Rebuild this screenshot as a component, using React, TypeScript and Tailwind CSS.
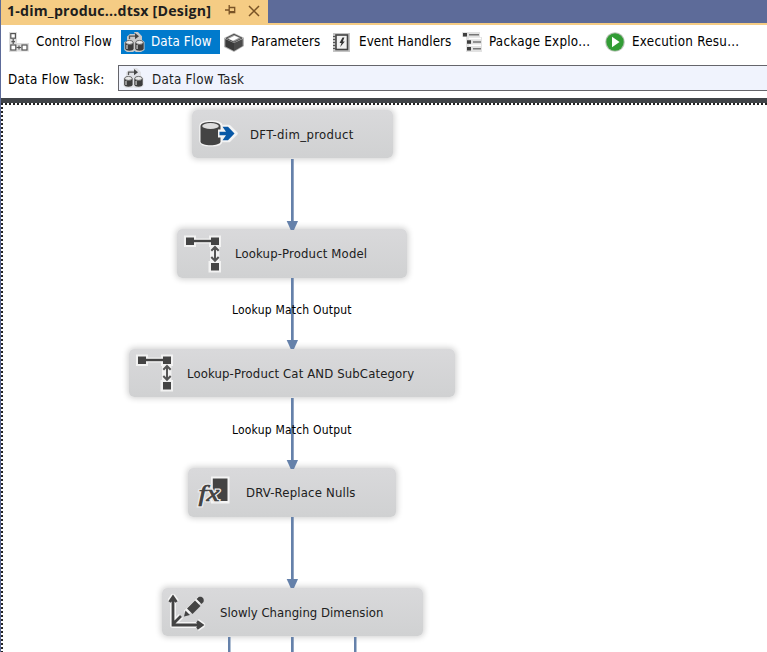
import type { ReactNode } from "react";

const UI = "font-['DejaVu_Sans_Condensed','DejaVu_Sans','Noto_Sans',sans-serif] [font-stretch:condensed]";

function ControlFlowIcon() {
  return (
    <svg width="20" height="20" viewBox="0 0 20 20" fill="#fff" stroke="#555" strokeWidth="1.2">
      <rect x="0" y="0" width="8" height="20" fill="#ddd" stroke="none" />
      <rect x="0" y="11" width="20" height="8.5" fill="#ddd" stroke="none" />
      <rect x="1.8" y="1.6" width="4.6" height="4.6" />
      <rect x="1.8" y="13" width="5" height="5" />
      <rect x="13" y="13" width="5" height="5" />
      <path d="M4.2 7v5M2.4 9.7h3.6M7.5 15.5H12M10 13.5v4" fill="none" />
    </svg>
  );
}

function DataFlowIcon({ halo }: { halo: string }) {
  return (
    <svg width="21" height="20" viewBox="0 0 21 20">
      <path d="M3 9V4.5L6 2h5L10 0h4l4 4.2V8l2.5 2v8L17 20h-5l-1.5-1L9 20H3L.3 18v-8Z" fill={halo} />
      <path d="M5.5 7V4.2H12" fill="none" stroke="#555" strokeWidth="1.3" />
      <path d="M11 1 15 4.2 11 7.300Z" fill="#444" />
      {[1.2, 11.3].map((x) => (
        <g key={x}>
          <path d={`M${x} 10.5v6c0 3 8.4 3 8.4 0v-6Z`} fill="#3d3d3d" />
          <ellipse cx={x + 4.2} cy="10.4" rx="3.7" ry="2" fill="#e8e8e8" stroke="#555" strokeWidth="0.8" />
          <path d={`M${x + 1.8} 13v4`} stroke="#bbb" strokeWidth="1.4" />
        </g>
      ))}
    </svg>
  );
}

function CubeIcon() {
  return (
    <svg width="20" height="19" viewBox="0 0 20 19">
      <path d="M10 0 20 4.8V13L10 19 0 14V5Z" fill="#b5b5b5" />
      <path d="M1.3 6 10 10v8L1.3 13.4Z" fill="#3b3b3b" />
      <path d="M18.7 6 10 10v8l8.7-5Z" fill="#4b4b4b" />
      <path d="m2 5.3 8-4 8 3.8-8 4Z" fill="#999" stroke="#555" />
      <path d="m4.500 5.8 6-3 4.500 2-6 3Z" fill="#fff" />
    </svg>
  );
}

function EventIcon() {
  return (
    <svg width="19" height="19" viewBox="0 0 19 19">
      <path d="M1 0h17v19H1Z" fill="#c4c4c4" />
      <rect x="4" y="2" width="11.5" height="14.5" fill="#f2f2f2" stroke="#444" strokeWidth="1.6" />
      <path d="M1 3.5h3M1 6.5h3M1 9.5h3M1 12.5h3M1 15.5h3" stroke="#555" />
      <path d="m10.5 4.5-3 5.5h2L8.2 14l4.6-5.5h-2l1.6-4Z" fill="#333" />
    </svg>
  );
}

function ExplorerIcon() {
  return (
    <svg width="20" height="20" viewBox="0 0 20 20">
      <path d="M0 0h18v5H20v15H4V5H0Z" fill="#e2e2e2" />
      <path d="M1 1h4v3.5H1ZM5 8.2h4v3.6H5ZM5 15h4v3.6H5Z" fill="#3f3f3f" />
      <path d="M7 2.7h10M11 10h8M11 16.8h8" stroke="#777" strokeWidth="1.5" />
      <path d="M7 6.5h12M7 13.3h12" stroke="#fff" strokeWidth="1.5" />
    </svg>
  );
}

function RunIcon() {
  return (
    <svg width="20" height="20" viewBox="0 0 20 20">
      <circle cx="10" cy="10" r="9.8" fill="#b9c3b7" />
      <circle cx="10" cy="10" r="8.7" fill="#329c35" />
      <path d="m7 4.8 7.6 5.2L7 15.2Z" fill="#fff" />
    </svg>
  );
}

function SourceIcon() {
  return (
    <svg width="40" height="40" viewBox="0 0 40 40">
      <g stroke="#f4f4f4" strokeWidth="3.5" strokeLinejoin="round">
        <path d="M3 12v15c0 5 20 5 20 0V12c0-5-20-5-20 0Z" />
        <path d="M22 17.5h7l-3.5-5H31l7 7-7 7h-5.500l3.500-5h-7Z" />
      </g>
      <path d="M2.500 12v15.500c0 5 20 5 20 0V12c0-5.500-20-5.500-20 0Z" fill="#444" />
      <ellipse cx="12.500" cy="12" rx="8.300" ry="3" fill="#ddd" />
      <path d="M20 15.500h6v8h-6Z" fill="#f4f4f4" />
      <path d="M21.500 17.800h6.500l-3.500-5H30l6.500 6.700-6.500 6.700h-5.500l3.500-5h-6.500Z" fill="#0858a6" />
    </svg>
  );
}

function LookupIcon() {
  return (
    <svg width="40" height="40" viewBox="0 0 40 40">
      <path d="M1 1.5h12v3h13v-3h12V13h-1.500v14H38v11.5H25.5V27h1.500V13H26V9.500H13V13H1Z" fill="#f2f2f2" />
      <path d="M3 3.5h8v7.5H3ZM28 3.5h8v7.5h-8ZM28 29h8V36.500h-8Z" fill="#444" />
      <path d="M10 7h18" stroke="#444" strokeWidth="2.4" />
      <path d="M32 14v13M28.300 16.800l3.700-3.800L35.700 16.800M28.300 23l3.700 3.800L35.700 23" fill="none" stroke="#555" strokeWidth="2" />
    </svg>
  );
}

function FormulaIcon() {
  return (
    <svg width="40" height="40" viewBox="0 0 40 40">
      <path d="M17 3.500h18.500V30.500H17Z" fill="#f4f4f4" />
      <path d="M18.800 5.500h14.700V28H18.800Z" fill="#444" />
      <text x="4.500" y="28" fontFamily="Liberation Serif, serif" fontSize="23" fontStyle="italic" fill="#555" stroke="#e8e8e8" strokeWidth="3" paintOrder="stroke" textLength="21" lengthAdjust="spacingAndGlyphs">fx</text>
      <text x="4.500" y="28" fontFamily="Liberation Serif, serif" fontSize="23" fontStyle="italic" fill="#444" stroke="#444" strokeWidth="0.5" textLength="21" lengthAdjust="spacingAndGlyphs">fx</text>
    </svg>
  );
}

function DimensionIcon() {
  return (
    <svg width="40" height="40" viewBox="0 0 40 40" fill="none">
      <path d="M5 5v28h28M1.5 10 5 5l3.5 5M29 29.500l5 3.5-5 3.5M6 31l7-7M18 21 32 7" stroke="#f4f4f4" strokeWidth="6" strokeLinejoin="round" />
      <path d="M5 5v28h29M1.5 10 5 5l3.5 5M29 29.500l5 3.5-5 3.5M6 31l7-7" stroke="#444" strokeWidth="2.8" />
      <path d="m19 16.5 8-8 5.500 5.500-8 8Z" fill="#444" />
      <path d="m28.5 7 2.200-2c3.500-1.300 6 1.700 4.800 5L33.500 12ZM17.500 18.500l4.500 4.500-6 1.500Z" fill="#444" />
    </svg>
  );
}

function Tool({ icon, label, box, text }: { icon: ReactNode; label: string; box: string; text: string }) {
  return (
    <div className={`flex h-6 shrink-0 items-center ${box}`}>
      <span className="flex w-[27px] shrink-0">{icon}</span>
      <span className={`whitespace-nowrap text-[13.3px] leading-6 ${text}`}>{label}</span>
    </div>
  );
}

function Node({ icon, label, box, text }: { icon: ReactNode; label: string; box: string; text: string }) {
  return (
    <div className={`absolute flex items-center rounded-[5px] bg-linear-to-b from-[#d9d9db] to-[#d0d1d2] pl-[6px] shadow-[0_0_6px_1px_rgba(0,0,0,0.2)] ${box}`}>
      {icon}
      <span className={`mt-px ml-[12px] whitespace-nowrap text-[13px] leading-5 text-[#202020] ${text}`}>{label}</span>
    </div>
  );
}

export default function App() {
  return (
    <div className={`flex h-[652px] w-[767px] flex-col overflow-hidden border-l border-[#5d6b99] bg-white text-black ${UI}`}>
      <div className="flex h-[25px] shrink-0 border-b-2 border-[#f5cc84] bg-[#5d6b99]">
        <div className="flex w-[267px] items-center bg-[#f5cc84] pl-[6px] text-[#1e1e1e]">
          <span className="mb-[2px] w-[204px] whitespace-nowrap font-['Open_Sans','Noto_Sans',sans-serif] text-[14.2px] leading-[20px] font-bold tracking-[0.19px] [font-stretch:normal]">1-dim_produc...dtsx [Design]</span>
          <svg className="mb-[3px] ml-[14px]" width="12" height="10" viewBox="0 0 12 10" fill="none" stroke="#795326" strokeWidth="1.3">
            <path d="M0 5h4M4.2 0v9.5M4.5 2.5h5.2v5H4.5M4.5 6.7h5" />
          </svg>
          <svg className="mb-[2px] ml-[11px]" width="12" height="12" viewBox="0 0 12 12" stroke="#795326" strokeWidth="1.5">
            <path d="m1 1 10 10M11 1 1 11" />
          </svg>
        </div>
      </div>

      <div className="flex h-[33px] shrink-0 pt-[5px]">
        <Tool icon={<ControlFlowIcon />} label="Control Flow" box="w-[120px] pl-[8px]" text="tracking-[0.13px]" />
        <Tool icon={<DataFlowIcon halo="#c9c9c9" />} label="Data Flow" box="w-[99px] bg-[#007acc] pl-[3px]" text="text-white tracking-[0.1px]" />
        <Tool icon={<CubeIcon />} label="Parameters" box="w-[109px] pl-[4px]" text="tracking-[0.1px]" />
        <Tool icon={<EventIcon />} label="Event Handlers" box="w-[129px] pl-[3px]" text="tracking-[0.07px]" />
        <Tool icon={<ExplorerIcon />} label="Package Explo..." box="w-[143px] pl-[4px]" text="tracking-[0.25px]" />
        <Tool icon={<RunIcon />} label="Execution Resu..." box="pl-[4px]" text="tracking-[0.27px]" />
      </div>

      <div className="flex h-10 shrink-0 pt-[7px]">
        <span className="w-[117px] pl-[7px] text-[13.3px] leading-[29px] tracking-[0.23px] whitespace-nowrap">Data Flow Task:</span>
        <div className="flex h-[26px] flex-1 items-center border border-r-0 border-[#65656b] bg-[#f0f3fd] pl-[4px]">
          <DataFlowIcon halo="#e0e1e6" />
          <span className="mt-[3px] ml-[8px] text-[13.3px] leading-5 tracking-[0.23px] whitespace-nowrap text-[#1e1e1e]">Data Flow Task</span>
        </div>
      </div>

      <div className="h-[5px] shrink-0 bg-[#414448]" />
      <div className="relative flex-1 overflow-hidden">
        <div className="absolute inset-x-0 top-0 h-[2px] bg-[repeating-linear-gradient(90deg,#222_0_2px,#fff_2px_4px)]" />
        <div className="absolute inset-y-0 left-0 w-[2px] bg-[repeating-linear-gradient(180deg,#222_0_2px,#fff_2px_4px)]" />

        <Node icon={<SourceIcon />} label="DFT-dim_product" box="left-[191px] top-[7px] h-[48px] w-[201px]" text="tracking-[0.35px]" />
        <Node icon={<LookupIcon />} label="Lookup-Product Model" box="left-[176px] top-[126px] h-[49px] w-[230px]" text="tracking-[0.15px]" />
        <Node icon={<LookupIcon />} label="Lookup-Product Cat AND SubCategory" box="left-[128px] top-[246px] h-[48px] w-[326px]" text="tracking-[0.13px]" />
        <Node icon={<FormulaIcon />} label="DRV-Replace Nulls" box="left-[187px] top-[365px] h-[49px] w-[208px]" text="tracking-[0.18px]" />
        <Node icon={<DimensionIcon />} label="Slowly Changing Dimension" box="left-[161px] top-[485px] h-[48px] w-[261px]" text="tracking-[0.02px]" />

        <svg className="absolute top-0 left-0" width="766" height="549" viewBox="0 0 766 549" fill="#6581aa">
          {[56, 175, 295, 414].map((y) => (
            <g key={y}>
              <rect x="290" y={y} width="2.7" height="65" />
              <path d={`M285.7 ${y + 61.9}h11.3l-4 9h-3.3Z`} />
            </g>
          ))}
          <rect x="227" y="534" width="2.5" height="15" />
          <rect x="290" y="534" width="2.7" height="15" />
          <rect x="353" y="534" width="2.5" height="15" />
        </svg>

        <span className="absolute top-[197px] left-[231px] text-[12px] leading-5 tracking-[0.2px] whitespace-nowrap">Lookup Match Output</span>
        <span className="absolute top-[317px] left-[231px] text-[12px] leading-5 tracking-[0.2px] whitespace-nowrap">Lookup Match Output</span>
      </div>
    </div>
  );
}
